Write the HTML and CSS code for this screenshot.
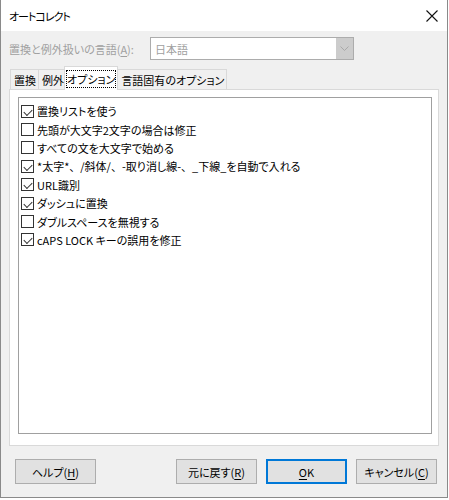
FILE: index.html
```html
<!DOCTYPE html>
<html lang="ja">
<head>
<meta charset="utf-8">
<link rel="stylesheet" href="styles.css">
</head>
<body>
<div class="window">
  <div class="titlebar">
    <span class="title">オートコレクト</span>
    <svg class="close" width="12" height="12" viewBox="0 0 12 12"><path d="M0.5 0.5 L11.5 11.5 M11.5 0.5 L0.5 11.5" stroke="#111" stroke-width="1.1" fill="none"/></svg>
  </div>
  <div class="body">
    <div class="langrow">
      <span class="langlabel">置換と例外扱いの言語(<u>A</u>):</span>
      <div class="combo">
        <span class="combotext">日本語</span>
        <span class="combobtn"><svg width="9" height="6" viewBox="0 0 9 6"><path d="M0.5 0.5 L4.5 4.5 L8.5 0.5" stroke="#a8a8a8" fill="none"/></svg></span>
      </div>
    </div>
    <div class="tabs">
      <div class="tab">置換</div>
      <div class="tab">例外</div>
      <div class="tab active"><span class="focus">オプション</span></div>
      <div class="tab">言語固有のオプション</div>
    </div>
    <div class="panel">
      <div class="list">
        <div class="row"><span class="cb on"></span>置換リストを使う</div>
        <div class="row"><span class="cb"></span>先頭が大文字2文字の場合は修正</div>
        <div class="row"><span class="cb"></span>すべての文を大文字で始める</div>
        <div class="row"><span class="cb on"></span>*太字*<span class="fw">、</span>/斜体/<span class="fw">、</span>-取り消し線-<span class="fw">、</span>_下線_を自動で入れる</div>
        <div class="row"><span class="cb on"></span>URL識別</div>
        <div class="row"><span class="cb on"></span>ダッシュに置換</div>
        <div class="row"><span class="cb"></span>ダブルスペースを無視する</div>
        <div class="row"><span class="cb on"></span>cAPS LOCK キーの誤用を修正</div>
      </div>
    </div>
    <div class="buttons">
      <button class="btn help">ヘルプ(<u>H</u>)</button>
      <div class="spacer"></div>
      <button class="btn">元に戻す(<u>R</u>)</button>
      <button class="btn ok"><u>O</u>K</button>
      <button class="btn">キャンセル(<u>C</u>)</button>
    </div>
  </div>
</div>
</body>
</html>
```
FILE: styles.css
```css
* { box-sizing: border-box; }
html, body { margin: 0; padding: 0; background: #ffffff; }
body {
  font-family: "Noto Sans CJK JP", "Noto Sans", sans-serif;
  font-size: 11px;
  font-feature-settings: "palt" 1;
  color: #000;
}
.window {
  width: 448px;
  height: 498px;
  border-left: 1px solid #8a8a8a;
  border-right: 1px solid #8a8a8a;
  border-bottom: 1px solid #8a8a8a;
  display: flex;
  flex-direction: column;
  background: #f0f0f0;
}
.titlebar {
  height: 31px;
  background: #ffffff;
  display: flex;
  align-items: center;
  padding-left: 8px;
  padding-right: 9px;
  flex: none;
}
.title { flex: 1; font-size: 11px; letter-spacing: -1px; }
.close { display: block; }
.body {
  flex: 1;
  display: flex;
  flex-direction: column;
  padding: 6px 10px 0 7px;
}
.langrow {
  display: flex;
  align-items: center;
  height: 23px;
}
.langlabel {
  width: 142px;
  padding-left: 1px;
  color: #a0a0a0;
}
.combo {
  width: 204px;
  height: 23px;
  border: 1px solid #acacac;
  background: #fff;
  display: flex;
  align-items: center;
}
.combotext { flex: 1; padding-left: 4px; color: #a0a0a0; }
.combobtn {
  width: 17px;
  height: 21px;
  background: #cccccc;
  display: flex;
  align-items: center;
  justify-content: center;
}
.tabs {
  display: flex;
  align-items: flex-end;
  margin-top: 6px;
  padding-left: 2px;
  height: 23px;
  position: relative;
  z-index: 1;
}
.tab {
  height: 20px;
  padding: 0 2px 0 3px;
  border: 1px solid #d9d9d9;
  border-bottom: none;
  margin-right: -1px;
  background: #f0f0f0;
  display: flex;
  align-items: center;
  line-height: 14px;
}
.tab.active {
  background: #fff;
  margin: 0 -1px -1px -2px;
  padding: 0 1px;
  height: 24px;
  position: relative;
}
.focus {
  border: 1px dotted #000;
  padding: 1px 0;
}
.panel {
  margin-left: 1px;
  width: 430px;
  height: 357px;
  border: 1px solid #d9d9d9;
  background: #fff;
  padding: 7px 6px 11px 8px;
}
.list {
  height: 100%;
  border: 1px solid #a0a0a0;
  background: #fff;
  padding-top: 4px;
  padding-left: 2px;
}
.row {
  height: 18.4px;
  display: flex;
  align-items: center;
  white-space: nowrap;
}
.fw { font-feature-settings: normal; }
.cb {
  width: 13px;
  height: 13px;
  border: 1px solid #333;
  background: #fff;
  margin-right: 3px;
  flex: none;
  position: relative;
}
.cb.on::after {
  content: "";
  position: absolute;
  left: 2px;
  top: 0px;
  width: 7px;
  height: 4px;
  border-left: 1.2px solid #333;
  border-bottom: 1.2px solid #333;
  transform: translate(0px, 3px) rotate(-45deg);
  transform-origin: center;
}
.buttons {
  display: flex;
  margin-top: 13px;
  padding-left: 7px;
}
.spacer { flex: 1; }
.btn {
  width: 81px;
  height: 25px;
  margin-left: 9px;
  background: #e1e1e1;
  border: 1px solid #adadad;
  font-family: inherit;
  font-feature-settings: "palt" 1;
  font-size: 11px;
  color: #000;
  padding: 0;
}
.btn.help { margin-left: 0; }
.btn.ok { border: 2px solid #0078d7; }
u { text-decoration-thickness: 1px; text-underline-offset: 2px; }
```
